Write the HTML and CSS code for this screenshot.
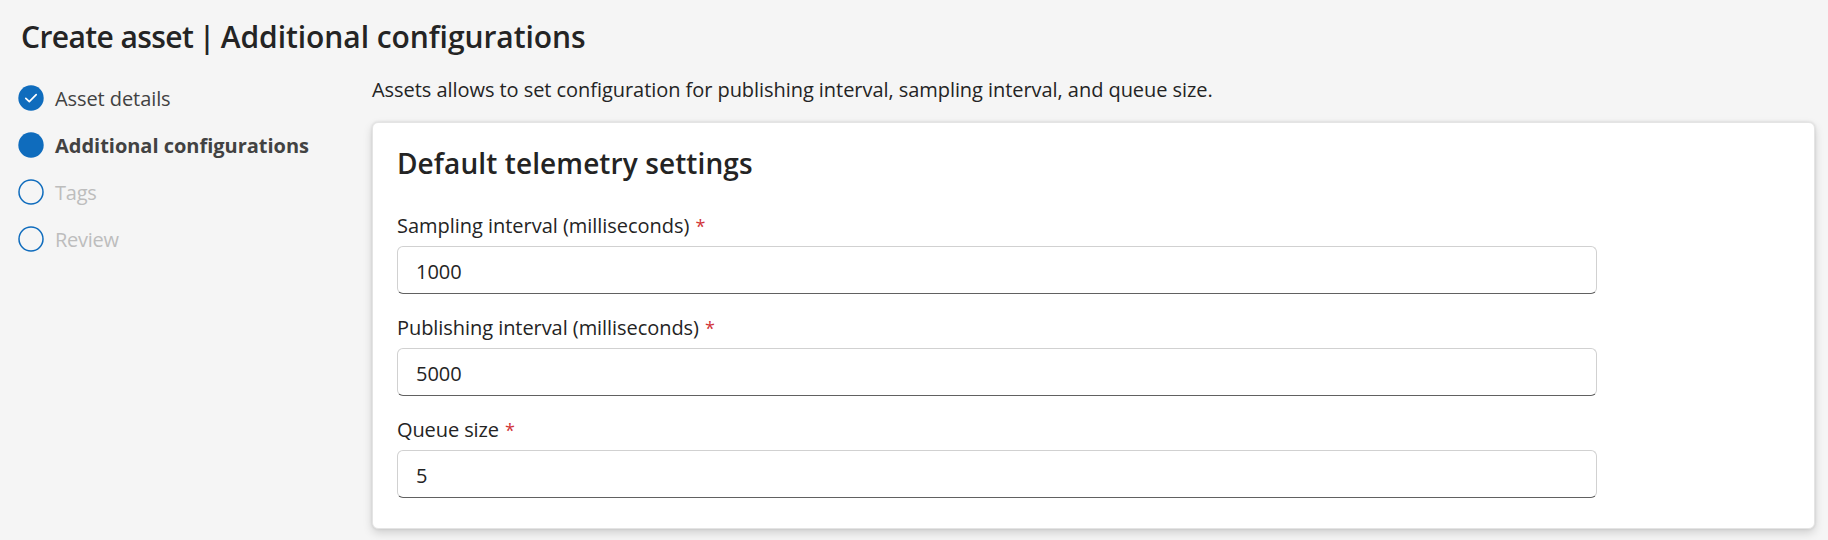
FILE: index.html
```
<!DOCTYPE html>
<html lang="en">
<head>
<meta charset="utf-8">
<title>Create asset | Additional configurations</title>
<link rel="stylesheet" href="styles.css">
</head>
<body>
<h1 class="page-title"><span class="title-flow">Create asset</span><span class="title-divider"> | </span>Additional configurations</h1>
<div class="wizard">
  <nav class="steps">
    <div class="step step-done">
      <svg class="marker" viewBox="0 0 26 26"><circle cx="13" cy="13" r="12.7" fill="#0f6cbd"/><path d="M7.8 13.3 11.3 16.7 18.2 9.6" fill="none" stroke="#fff" stroke-width="1.7" stroke-linecap="round" stroke-linejoin="round"/></svg>
      <span>Asset details</span>
    </div>
    <div class="step step-current">
      <svg class="marker" viewBox="0 0 26 26"><circle cx="13" cy="13" r="12.7" fill="#0f6cbd"/></svg>
      <span>Additional configurations</span>
    </div>
    <div class="step step-pending">
      <svg class="marker" viewBox="0 0 26 26"><circle cx="13" cy="13" r="12" fill="none" stroke="#0f6cbd" stroke-width="1.5"/></svg>
      <span>Tags</span>
    </div>
    <div class="step step-pending">
      <svg class="marker" viewBox="0 0 26 26"><circle cx="13" cy="13" r="12" fill="none" stroke="#0f6cbd" stroke-width="1.5"/></svg>
      <span>Review</span>
    </div>
  </nav>
  <main class="content">
    <p class="intro">Assets allows to set configuration for publishing interval, sampling interval, and queue size.</p>
    <section class="card">
      <h2 class="card-title">Default telemetry settings</h2>
      <div class="field">
        <label class="label" for="sampling"><span class="label-sampling">Sampling interval (milliseconds)</span><span class="required">*</span></label>
        <input class="input" id="sampling" type="text" value="1000">
      </div>
      <div class="field">
        <label class="label" for="publishing"><span class="label-publishing">Publishing interval (milliseconds)</span><span class="required">*</span></label>
        <input class="input" id="publishing" type="text" value="5000">
      </div>
      <div class="field">
        <label class="label" for="queue"><span class="label-queue">Queue size</span><span class="required">*</span></label>
        <input class="input" id="queue" type="text" value="5">
      </div>
    </section>
  </main>
</div>
</body>
</html>
```
FILE: styles.css
```
* { box-sizing: border-box; }
html { height: 100%; overflow: hidden; }
body {
  margin: 0;
  height: 100%;
  padding: 15px 13px 0 18px;
  background: #f5f5f5;
  color: #242424;
  font: 400 20px/28px "Open Sans", "Noto Sans", sans-serif;
}
.page-title {
  margin: 0 0 0 3px;
  font-size: 30px;
  line-height: 43px;
  font-weight: 560;
  letter-spacing: -0.06px;
}
.title-flow { letter-spacing: -0.6px; }
.title-divider { word-spacing: -2.2px; }
.wizard { display: flex; }
.steps {
  flex: 0 0 354px;
  display: flex;
  flex-direction: column;
  gap: 19px;
  padding-top: 27px;
}
.step {
  display: flex;
  align-items: flex-start;
  gap: 11px;
  height: 28px;
  color: #424242;
  letter-spacing: -0.08px;
}
.step-current { font-weight: 700; letter-spacing: -0.02px; }
.step-pending { color: #bdbdbd; letter-spacing: -0.25px; }
.marker { width: 26px; height: 26px; flex: none; }
.content { flex: 1; padding-top: 18px; }
.intro { margin: 0 0 18px; letter-spacing: -0.054px; }
.card {
  height: 407px;
  padding: 21px 24px;
  border: 1px solid #e4e4e4;
  border-radius: 6px;
  background: #fff;
  box-shadow: 0 0 3px rgba(0, 0, 0, 0.12), 0 4px 10px rgba(0, 0, 0, 0.15);
}
.card-title {
  margin: 0 0 30px;
  font-size: 28px;
  line-height: 38px;
  font-weight: 580;
  letter-spacing: 0.1px;
}
.field { margin-bottom: 20px; width: 1200px; }
.label { display: flex; gap: 6px; height: 34px; line-height: 28px; }
.label-sampling { letter-spacing: -0.03px; }
.label-publishing { letter-spacing: -0.06px; }
.label-queue { letter-spacing: -0.1px; }
.required { color: #d13438; font-size: 18px; }
.input {
  display: block;
  width: 1200px;
  height: 48px;
  padding: 2px 18px 0;
  border: 1px solid #d1d1d1;
  border-bottom-color: #616161;
  border-radius: 6px;
  background: #fff;
  color: inherit;
  font: inherit;
  outline: none;
}
```
